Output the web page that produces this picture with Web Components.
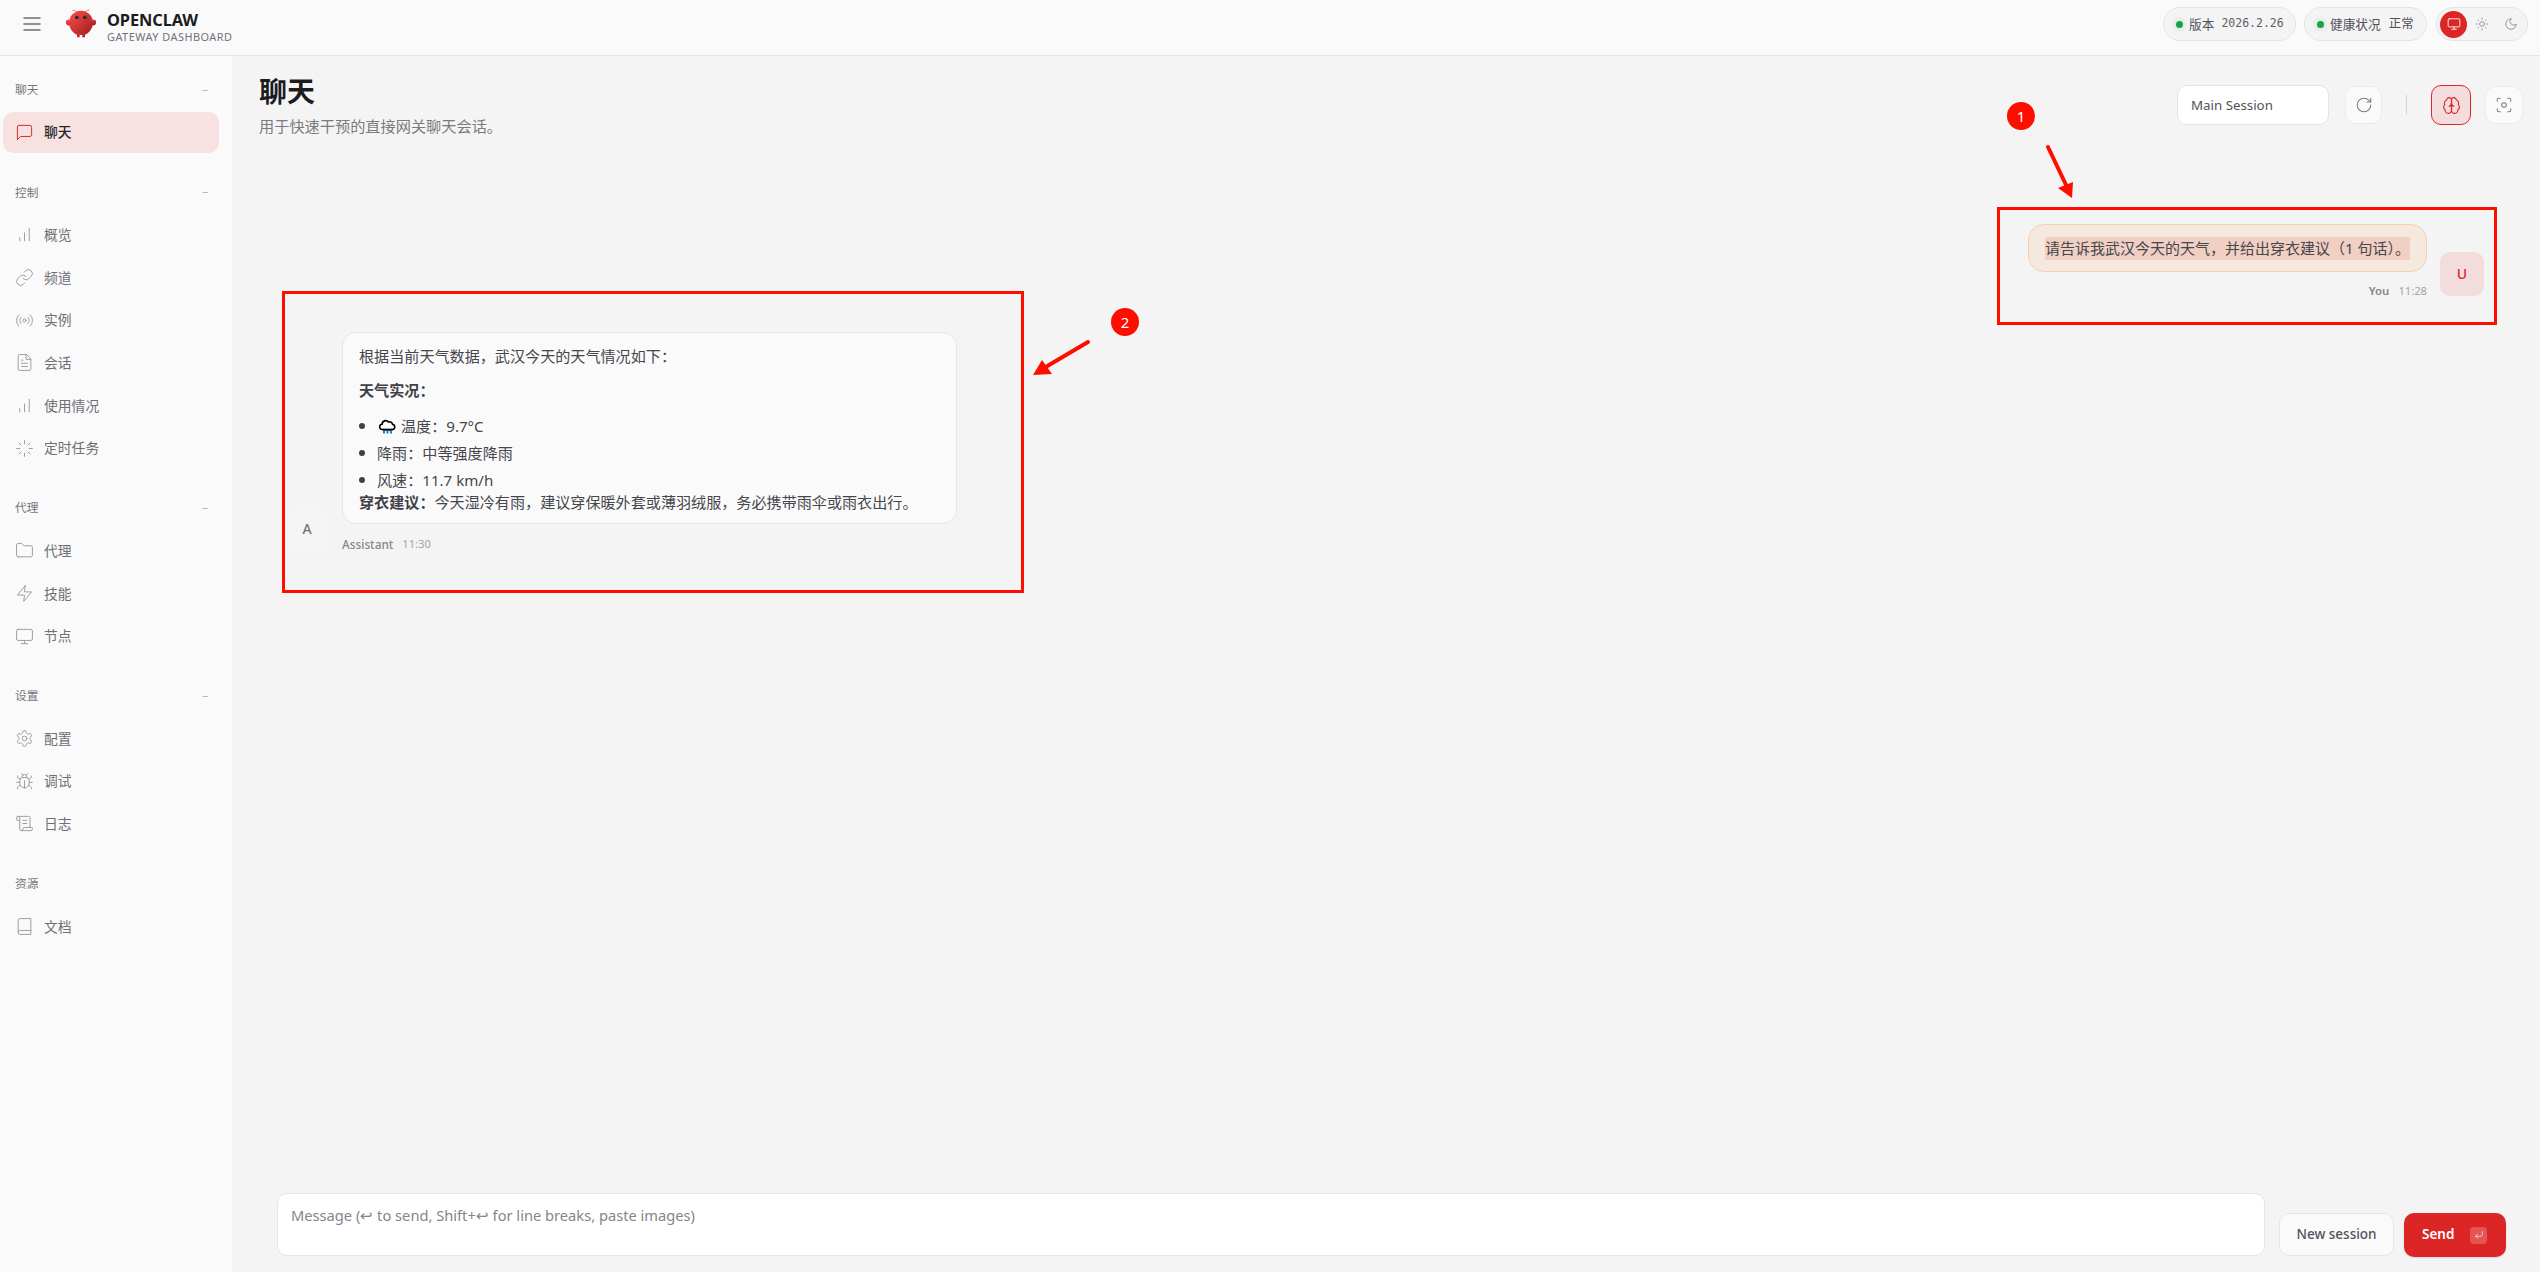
<!DOCTYPE html>
<html lang="zh"><head><meta charset="utf-8"><title>OpenClaw</title>
<style>
html,body{margin:0;height:100%;overflow:hidden;background:#f4f4f4}
body{font-family:"Noto Sans","Noto Sans CJK SC",sans-serif;color:#3f3f46}
</style></head><body>
<oc-app>
  <oc-topbar slot="top"></oc-topbar>
  <oc-sidebar slot="side">
    <oc-nav-group label="聊天">
      <oc-nav-item icon="message" active>聊天</oc-nav-item>
    </oc-nav-group>
    <oc-nav-group label="控制">
      <oc-nav-item icon="chart">概览</oc-nav-item>
      <oc-nav-item icon="link">频道</oc-nav-item>
      <oc-nav-item icon="radio">实例</oc-nav-item>
      <oc-nav-item icon="file">会话</oc-nav-item>
      <oc-nav-item icon="chart">使用情况</oc-nav-item>
      <oc-nav-item icon="loader">定时任务</oc-nav-item>
    </oc-nav-group>
    <oc-nav-group label="代理">
      <oc-nav-item icon="folder">代理</oc-nav-item>
      <oc-nav-item icon="zap">技能</oc-nav-item>
      <oc-nav-item icon="monitor">节点</oc-nav-item>
    </oc-nav-group>
    <oc-nav-group label="设置">
      <oc-nav-item icon="settings">配置</oc-nav-item>
      <oc-nav-item icon="bug">调试</oc-nav-item>
      <oc-nav-item icon="scroll">日志</oc-nav-item>
    </oc-nav-group>
    <oc-nav-group label="资源" nodash>
      <oc-nav-item icon="book">文档</oc-nav-item>
    </oc-nav-group>
  </oc-sidebar>
  <oc-page-header></oc-page-header>
  <oc-thread>
    <oc-message role="user" who="You" time="11:28" initial="U"><span class="hl">请告诉我武汉今天的天气，并给出穿衣建议（1 句话）。</span></oc-message>
    <oc-message role="assistant" who="Assistant" time="11:30" initial="A">
      <oc-weather-reply></oc-weather-reply>
    </oc-message>
  </oc-thread>
  <oc-composer></oc-composer>
  <oc-box slot="over" x="1997" y="207" w="500" h="118"></oc-box>
  <oc-box slot="over" x="282" y="291" w="742" h="302"></oc-box>
  <oc-badge slot="over" x="2021" y="116">1</oc-badge>
  <oc-badge slot="over" x="1125" y="322">2</oc-badge>
  <oc-arrows slot="over"></oc-arrows>
</oc-app>
<script>
const F='"Noto Sans","Noto Sans CJK SC",sans-serif';
const I={
menu:'<path d="M4 12h16M4 6h16M4 18h16"/>',
message:'<path d="M21 15a2 2 0 0 1-2 2H7l-4 4V5a2 2 0 0 1 2-2h14a2 2 0 0 1 2 2z"/>',
chart:'<path d="M12 20V10M18 20V4M6 20v-4"/>',
link:'<path d="M10 13a5 5 0 0 0 7.54.54l3-3a5 5 0 0 0-7.07-7.07l-1.72 1.71"/><path d="M14 11a5 5 0 0 0-7.54-.54l-3 3a5 5 0 0 0 7.07 7.07l1.71-1.71"/>',
radio:'<path d="M4.9 19.1C1 15.2 1 8.8 4.9 4.9"/><path d="M7.8 16.2c-2.3-2.3-2.3-6.1 0-8.5"/><circle cx="12" cy="12" r="2"/><path d="M16.2 7.8c2.3 2.3 2.3 6.1 0 8.5"/><path d="M19.1 4.9C23 8.8 23 15.1 19.1 19"/>',
file:'<path d="M14.5 2H6a2 2 0 0 0-2 2v16a2 2 0 0 0 2 2h12a2 2 0 0 0 2-2V7.5L14.5 2z"/><path d="M14 2v6h6M16 13H8M16 17H8M10 9H8"/>',
loader:'<path d="M12 2v4M12 18v4M4.93 4.93l2.83 2.83M16.24 16.24l2.83 2.83M2 12h4M18 12h4M4.93 19.07l2.83-2.83M16.24 7.76l2.83-2.83"/>',
folder:'<path d="M4 20h16a2 2 0 0 0 2-2V8a2 2 0 0 0-2-2h-7.93a2 2 0 0 1-1.66-.9l-.82-1.2A2 2 0 0 0 7.93 3H4a2 2 0 0 0-2 2v13c0 1.1.9 2 2 2Z"/>',
zap:'<path d="M13 2 3 14h9l-1 8 10-12h-9l1-8z"/>',
monitor:'<rect x="2" y="3" width="20" height="14" rx="2"/><path d="M8 21h8M12 17v4"/>',
settings:'<path d="M12.22 2h-.44a2 2 0 0 0-2 2v.18a2 2 0 0 1-1 1.73l-.43.25a2 2 0 0 1-2 0l-.15-.08a2 2 0 0 0-2.73.73l-.22.38a2 2 0 0 0 .73 2.73l.15.1a2 2 0 0 1 1 1.72v.51a2 2 0 0 1-1 1.74l-.15.09a2 2 0 0 0-.73 2.73l.22.38a2 2 0 0 0 2.73.73l.15-.08a2 2 0 0 1 2 0l.43.25a2 2 0 0 1 1 1.73V20a2 2 0 0 0 2 2h.44a2 2 0 0 0 2-2v-.18a2 2 0 0 1 1-1.73l.43-.25a2 2 0 0 1 2 0l.15.08a2 2 0 0 0 2.73-.73l.22-.39a2 2 0 0 0-.73-2.73l-.15-.08a2 2 0 0 1-1-1.74v-.5a2 2 0 0 1 1-1.74l.15-.09a2 2 0 0 0 .73-2.73l-.22-.38a2 2 0 0 0-2.73-.73l-.15.08a2 2 0 0 1-2 0l-.43-.25a2 2 0 0 1-1-1.73V4a2 2 0 0 0-2-2z"/><circle cx="12" cy="12" r="3"/>',
bug:'<path d="m8 2 1.88 1.88M14.12 3.88 16 2M9 7.13v-1a3 3 0 1 1 6 0v1"/><path d="M12 20c-3.3 0-6-2.7-6-6v-3a4 4 0 0 1 4-4h4a4 4 0 0 1 4 4v3c0 3.3-2.7 6-6 6"/><path d="M12 20v-9M6.53 9C4.6 8.8 3 7.1 3 5M6 13H2M3 21c0-2.1 1.7-3.9 3.8-4M20.97 5c0 2.1-1.6 3.8-3.5 4M22 13h-4M17.2 17c2.1.1 3.8 1.9 3.8 4"/>',
scroll:'<path d="M15 12h-5M15 8h-5M19 17V5a2 2 0 0 0-2-2H4"/><path d="M8 21h12a2 2 0 0 0 2-2v-1a1 1 0 0 0-1-1H11a1 1 0 0 0-1 1v1a2 2 0 1 1-4 0V5a2 2 0 1 0-4 0v2a1 1 0 0 0 1 1h3"/>',
book:'<path d="M4 19.5v-15A2.5 2.5 0 0 1 6.5 2H20v20H6.5a2.5 2.5 0 0 1 0-5H20"/>',
sun:'<circle cx="12" cy="12" r="4"/><path d="M12 2v2M12 20v2M4.93 4.93l1.41 1.41M17.66 17.66l1.41 1.41M2 12h2M20 12h2M6.34 17.66l-1.41 1.41M19.07 4.93l-1.41 1.41"/>',
moon:'<path d="M12 3a6 6 0 0 0 9 9 9 9 0 1 1-9-9Z"/>',
rotate:'<path d="M21 12a9 9 0 1 1-9-9c2.52 0 4.93 1 6.74 2.74L21 8"/><path d="M21 3v5h-5"/>',
brain:'<path d="M12 5a3 3 0 1 0-5.997.125 4 4 0 0 0-2.526 5.77 4 4 0 0 0 .556 6.588A4 4 0 1 0 12 18Z"/><path d="M12 5a3 3 0 1 1 5.997.125 4 4 0 0 1 2.526 5.77 4 4 0 0 1-.556 6.588A4 4 0 1 1 12 18Z"/><path d="M15 13a4.5 4.5 0 0 1-3-4 4.5 4.5 0 0 1-3 4M12 18V9"/>',
focus:'<path d="M3 7V5a2 2 0 0 1 2-2h2M17 3h2a2 2 0 0 1 2 2v2M21 17v2a2 2 0 0 1-2 2h-2M7 21H5a2 2 0 0 1-2-2v-2"/><circle cx="12" cy="12" r="3"/>',
enter:'<path d="m9 10-5 5 5 5"/><path d="M20 4v7a4 4 0 0 1-4 4H4"/>'
};
class Base extends HTMLElement{
  connectedCallback(){ if(this.shadowRoot) return; this.attachShadow({mode:'open'}).innerHTML=this.html(); }
  attr(n,d=''){ return this.getAttribute(n)??d; }
}
const def=(n,fn)=>customElements.define(n,class extends Base{html(){return fn(this)}});

def('oc-icon',e=>`<style>:host{display:inline-flex;flex:none;width:var(--s,16px);height:var(--s,16px)}svg{width:100%;height:100%;fill:none;stroke:currentColor;stroke-width:var(--sw,1.5);stroke-linecap:round;stroke-linejoin:round}</style><svg viewBox="0 0 24 24">${I[e.attr('name')]}</svg>`);

def('oc-app',()=>`<style>
:host{display:grid;grid-template-columns:232px 1fr;grid-template-rows:56px auto 1fr auto;height:100vh;position:relative;overflow:hidden;background:#f4f4f4}
::slotted([slot=top]){grid-column:1/3}
::slotted([slot=side]){grid-row:2/5}
</style><slot name="top"></slot><slot name="side"></slot><slot></slot><slot name="over"></slot>`);

def('oc-topbar',()=>`<style>
:host{display:flex;align-items:flex-start;box-sizing:border-box;height:56px;padding:7px 12px 0 20px;background:#fafafa;border-bottom:1px solid #e4e4e4}
.menu{--s:24px;--sw:1.5;color:#6f6f76;margin-top:5px}
.logo{width:32px;height:32px;margin:1px 10px 0 21px;flex:none}
.brand{display:flex;flex-direction:column;margin-top:3px}
b{font:700 16.4px/20px ${F};color:#1c1c1f;letter-spacing:-.1px}
small{font:400 10.9px/13px ${F};color:#71717a;letter-spacing:.5px;white-space:nowrap}
.sp{flex:1}
.pill{display:flex;align-items:center;box-sizing:border-box;height:34px;border:1px solid #e4e4e4;border-radius:17px;background:#f4f4f4;font:400 12.7px/1 ${F};color:#52525b;white-space:nowrap}
.st{padding:0 12px;margin-right:8px}
.st.a{width:133px}.st.b{width:123px;margin-right:9px}
i{width:7px;height:7px;border-radius:50%;background:#16a34a;box-shadow:0 0 6px rgba(22,163,74,.35);margin-right:6px;flex:none}
.mono{font:11.5px/1 "DejaVu Sans Mono",monospace;margin-left:7px;color:#5f5f66}
.val{margin-left:8px;font-size:12.4px}
.theme{padding:0 3px;gap:1.5px;width:92px}
.tb{width:27px;height:27px;border-radius:50%;display:flex;align-items:center;justify-content:center;color:#8b8b92;--s:14px}
.tb.on{background:#dc2626;color:#fff}
</style>
<oc-icon class="menu" name="menu"></oc-icon>
<svg class="logo" viewBox="0 0 120 120"><defs><linearGradient id="g" x1="0" y1="0" x2="1" y2="1"><stop offset="0" stop-color="#ff4d4d"/><stop offset="1" stop-color="#991b1b"/></linearGradient></defs>
<path fill="url(#g)" d="M60 10C30 10 15 35 15 55c0 20 15 40 30 45v10h10v-10s5 2 10 0v10h10v-10c15-5 30-25 30-45 0-20-15-45-45-45Z"/>
<path fill="url(#g)" d="M20 45C5 40 0 50 5 60s15 5 20-5c3-7 0-10-5-10ZM100 45c15-5 20 5 15 15s-15 5-20-5c-3-7 0-10 5-10Z"/>
<path d="M45 15Q35 5 30 8M75 15Q85 5 90 8" fill="none" stroke="#ff4d4d" stroke-width="3" stroke-linecap="round"/>
<circle cx="45" cy="35" r="6" fill="#050810"/><circle cx="75" cy="35" r="6" fill="#050810"/><circle cx="46" cy="34" r="2.5" fill="#00e5cc"/><circle cx="76" cy="34" r="2.5" fill="#00e5cc"/></svg>
<div class="brand"><b>OPENCLAW</b><small>GATEWAY DASHBOARD</small></div>
<div class="sp"></div>
<div class="pill st a"><i></i><span>版本</span><span class="mono">2026.2.26</span></div>
<div class="pill st b"><i></i><span>健康状况</span><span class="val">正常</span></div>
<div class="pill theme"><span class="tb on"><oc-icon name="monitor"></oc-icon></span><span class="tb"><oc-icon name="sun"></oc-icon></span><span class="tb"><oc-icon name="moon"></oc-icon></span></div>`);

def('oc-sidebar',()=>`<style>:host{display:flex;flex-direction:column;gap:26.8px;box-sizing:border-box;padding:21px 13px 0 3px;background:#fafafa;overflow:hidden}</style><slot></slot>`);

def('oc-nav-group',e=>`<style>
:host{display:block}
.h{display:flex;align-items:center;justify-content:space-between;height:24px;margin-bottom:10.8px;padding:0 11px 0 12px;font:400 11.7px/24px ${F};color:#75757c}
em{font:normal 11px/1 ${F};color:#a8a8ae}
.l{display:flex;flex-direction:column;gap:1.67px}
</style><div class="h"><span>${e.attr('label')}</span>${e.hasAttribute('nodash')?'':'<em>−</em>'}</div><div class="l"><slot></slot></div>`);

def('oc-nav-item',e=>{const on=e.hasAttribute('active');return `<style>
:host{display:flex;align-items:center;gap:10.5px;height:41px;box-sizing:border-box;padding:0 12px 0 11.5px;border-radius:10px;font:${on?500:400} 13.8px/1 ${F};color:${on?'#27272a':'#6f6f76'};${on?'background:#f8e2e1;':''}}
oc-icon{color:${on?'#dc2626':'#9d9da3'};--s:19px;--sw:1.25}
</style><oc-icon name="${e.attr('icon')}"></oc-icon><span><slot></slot></span>`});

def('oc-page-header',()=>`<style>
:host{display:flex;align-items:flex-start;justify-content:space-between;padding:18px 17px 0 27px}
h1{margin:0 0 6.5px;font:700 28px/34px ${F};color:#1c1c1f}
p{margin:0;font:400 15.2px/22px ${F};color:#7a7a80}
.tools{display:flex;align-items:center;margin-top:11px}
.sel{box-sizing:border-box;width:152px;height:40px;padding:1px 13px 0;display:flex;align-items:center;background:#fff;border:1px solid #e4e4e4;border-radius:10px;font:400 13.3px/1 ${F};color:#52525b;white-space:nowrap;margin-right:16px}
.btn{box-sizing:border-box;width:37px;height:38px;display:flex;align-items:center;justify-content:center;background:#fafafa;border:1px solid #ececec;border-radius:10px;color:#7a7a80}
.r{--s:18px;--sw:1.4}
.f{width:38px;--s:18px;--sw:1.4;margin-left:14px}
.div{width:1px;height:20px;background:#d4d4d4;margin:0 24px 0 24px}
.on{width:40px;height:40px;background:#f4dcdc;border-color:#dc2626;color:#dc2626;--s:19px;--sw:1.4}
</style><div><h1>聊天</h1><p>用于快速干预的直接网关聊天会话。</p></div>
<div class="tools"><div class="sel">Main Session</div><div class="btn r"><oc-icon name="rotate"></oc-icon></div><div class="div"></div><div class="btn on"><oc-icon name="brain"></oc-icon></div><div class="btn f"><oc-icon name="focus"></oc-icon></div></div>`);

def('oc-thread',()=>`<style>:host{display:flex;flex-direction:column;gap:34px;padding:87.5px 56px 0;min-height:0}</style><slot></slot>`);

def('oc-message',e=>{const u=e.attr('role')==='user';return `<style>
:host{display:flex;flex-direction:${u?'row-reverse':'row'};align-items:flex-end;gap:${u?13:14}px}
.av{flex:none;box-sizing:border-box;width:${u?44:40}px;height:${u?44:41}px;margin-bottom:2px;border-radius:10px;display:flex;align-items:center;justify-content:center;${u?'':'padding-right:2px;'}background:${u?'#f3dcdc':'#f5f5f5'};color:${u?'#dc2626':'#71717a'};font:500 14px/1 ${F}}
.col{display:flex;flex-direction:column;align-items:${u?'flex-end':'flex-start'}}
.bub{box-sizing:border-box;${u?'padding:11.5px 16px;background:#f5e8dd;border:1px solid #f5cfb4;border-radius:16px;font:400 15px/22px '+F+';':'width:615px;padding:12px 16px 10px;background:#fafafa;border:1px solid #e6e6e6;border-radius:14px;font:400 15.1px/22px '+F+';'}color:#46464d}
.meta{display:flex;gap:9px;margin-top:${u?12:13}px;font:400 11.2px/14px ${F};color:#a3a3a8}
.meta b{font-size:${u?11.4:11.8}px;font-weight:${u?600:500};color:#85858b}
::slotted(.hl){display:inline-block;line-height:23px;background:#f1cfc3;white-space:nowrap}
</style><div class="av">${e.attr('initial')}</div><div class="col"><div class="bub"><slot></slot></div><div class="meta"><b>${e.attr('who')}</b><span>${e.attr('time')}</span></div></div>`});

def('oc-weather-reply',()=>`<style>
:host{display:block}
p{margin:0 0 12px}
p.t{margin-bottom:14px}
p.last{margin:0}
strong{font-weight:700;color:#3f3f46}
ul{margin:0;padding:0;list-style:none}
li{display:flex;align-items:center;margin-bottom:5px}
li:last-child{margin:0}
li::before{content:"";width:6px;height:6px;border-radius:50%;background:#3f3f46;margin-right:12px;flex:none}
svg{width:17px;height:15px;flex:none;margin:0 5px 0 2px}
</style><p>根据当前天气数据，武汉今天的天气情况如下：</p><p class="t"><strong>天气实况：</strong></p>
<ul><li><svg viewBox="0 0 17 15"><path d="M4.200 10.500H3.400a2.600 2.600 0 0 1-.3-5.200A3.600 3.600 0 0 1 9.500 3a3 3 0 0 1 4.100 2.400 2.600 2.600 0 0 1 0 5.100Z" fill="#fff" stroke="#000" stroke-width="1.600"/><path d="M3.500 10.800h10" stroke="#000" stroke-width="1.800"/><path d="M5 11.500v3M8.500 11.500v3M12 11.500v3" stroke="#0a8fc4" stroke-width="2"/></svg><span>温度：9.7°C</span></li><li><span>降雨：中等强度降雨</span></li><li><span>风速：11.7 km/h</span></li></ul>
<p class="last"><strong>穿衣建议：</strong>今天湿冷有雨，建议穿保暖外套或薄羽绒服，务必携带雨伞或雨衣出行。</p>`);

def('oc-composer',()=>`<style>
:host{display:flex;align-items:flex-end;padding:0 34px 15px 45px}
.ta{flex:1;box-sizing:border-box;height:63px;margin-bottom:1px;padding:10px 13px;background:#fff;border:1px solid #e6e6e6;border-radius:10px;font:400 14.67px/22px ${F};color:#85858b;white-space:nowrap}
.ns{box-sizing:border-box;width:115px;height:43px;margin:0 10px 1px 14px;display:flex;align-items:center;justify-content:center;background:#fafafa;border:1px solid #e6e6e6;border-radius:10px;font:500 13.5px/1 ${F};color:#52525b}
.send{box-sizing:border-box;width:102px;height:44px;display:flex;align-items:center;gap:16px;padding-left:18px;background:#dc2626;border-radius:10px;font:600 13.5px/1 ${F};color:#fff;box-shadow:0 1px 2px rgba(0,0,0,.12)}
kbd{width:17px;height:17px;border-radius:4px;background:rgba(255,255,255,.22);display:flex;align-items:center;justify-content:center;--s:10px}
</style><div class="ta">Message (↩ to send, Shift+↩ for line breaks, paste images)</div><div class="ns">New session</div><div class="send"><span>Send</span><kbd><oc-icon name="enter"></oc-icon></kbd></div>`);

def('oc-box',e=>`<style>:host{position:absolute;box-sizing:border-box;left:${e.attr('x')}px;top:${e.attr('y')}px;width:${e.attr('w')}px;height:${e.attr('h')}px;border:3px solid #ff0d00;pointer-events:none}</style>`);
def('oc-badge',e=>`<style>:host{position:absolute;left:${e.attr('x')-14}px;top:${e.attr('y')-14}px;width:28px;height:28px;border-radius:50%;background:#ff0d00;color:#fff;display:flex;align-items:center;justify-content:center;font:400 15px/1 ${F}}</style><slot></slot>`);
def('oc-arrows',()=>`<style>:host{position:absolute;inset:0;pointer-events:none}svg{width:100%;height:100%;display:block}</style><svg viewBox="0 0 2540 1272"><g fill="#ff0d00" stroke="none"><polygon points="2072,198 2058,188 2073,182"/><polygon points="1033,375 1042,360 1052,374"/></g><g stroke="#ff0d00" stroke-width="4" stroke-linecap="round" fill="none"><path d="M2048 147 2067 187"/><path d="M1088 342 1044 368"/></g></svg>`);
</script>
</body></html>
